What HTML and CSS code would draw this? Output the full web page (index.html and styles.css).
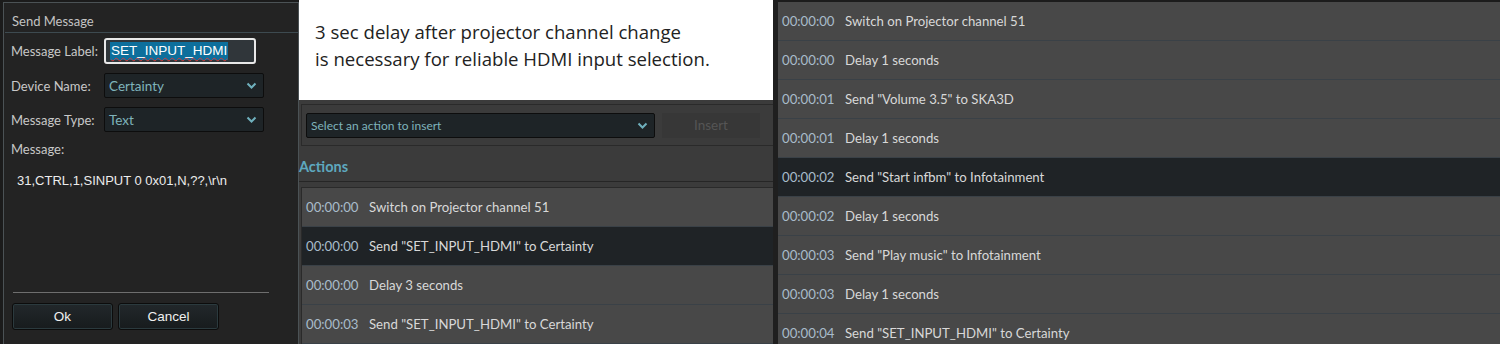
FILE: index.html
```html
<!DOCTYPE html>
<html>
<head>
    <title>Send Message</title>
    <link rel="stylesheet" href="styles.css">
</head>
<body>
    <!-- Send Message dialog -->
    <div class="dlg">
        <div class="dlg-title">Send Message</div>
        <div class="form">
            <label>Message Label:</label>
            <div class="text-in"><span class="sel">SET_INPUT_HDMI</span></div>
            <label>Device Name:</label>
            <div class="combo">Certainty
                <svg width="11" height="7" viewBox="0 0 11 7"><polyline points="1.5,1.5 5.5,5.5 9.5,1.5" fill="none" stroke="#6fb0bd" stroke-width="2"/></svg>
            </div>
            <label>Message Type:</label>
            <div class="combo">Text
                <svg width="11" height="7" viewBox="0 0 11 7"><polyline points="1.5,1.5 5.5,5.5 9.5,1.5" fill="none" stroke="#6fb0bd" stroke-width="2"/></svg>
            </div>
            <label>Message:</label>
        </div>
        <div class="msg">31,CTRL,1,SINPUT 0 0x01,N,??,\r\n</div>
        <div class="dlg-foot">
            <div class="rule"></div>
            <div class="btns">
                <button class="btn">Ok</button>
                <button class="btn">Cancel</button>
            </div>
        </div>
    </div>

    <!-- middle: note + editor -->
    <div class="mid">
        <div class="note">3 sec delay after projector channel change<br>is necessary for reliable HDMI input selection.</div>
        <div class="toolbar">
            <div class="combo wide">Select an action to insert
                <svg width="11" height="7" viewBox="0 0 11 7"><polyline points="1.5,1.5 5.5,5.5 9.5,1.5" fill="none" stroke="#6fb0bd" stroke-width="2"/></svg>
            </div>
            <button class="insert">Insert</button>
        </div>
        <h2 class="sect">Actions</h2>
        <ul class="list">
            <li><span class="t">00:00:00</span>Switch on Projector channel 51</li>
            <li class="on"><span class="t">00:00:00</span>Send "SET_INPUT_HDMI" to Certainty</li>
            <li><span class="t">00:00:00</span>Delay 3 seconds</li>
            <li><span class="t">00:00:03</span>Send "SET_INPUT_HDMI" to Certainty</li>
        </ul>
    </div>

    <!-- right: longer sequence -->
    <div class="right">
        <ul class="list">
            <li><span class="t">00:00:00</span>Switch on Projector channel 51</li>
            <li><span class="t">00:00:00</span>Delay 1 seconds</li>
            <li><span class="t">00:00:01</span>Send "Volume 3.5" to SKA3D</li>
            <li><span class="t">00:00:01</span>Delay 1 seconds</li>
            <li class="on"><span class="t">00:00:02</span>Send "Start infbm" to Infotainment</li>
            <li><span class="t">00:00:02</span>Delay 1 seconds</li>
            <li><span class="t">00:00:03</span>Send "Play music" to Infotainment</li>
            <li><span class="t">00:00:03</span>Delay 1 seconds</li>
            <li><span class="t">00:00:04</span>Send "SET_INPUT_HDMI" to Certainty</li>
        </ul>
    </div>
</body>
</html>
```

FILE: styles.css
```css
* {
  padding: 0;
  margin: 0;
  box-sizing: border-box;
  list-style: none;
}

body {
  width: 1500px;
  height: 344px;
  overflow: hidden;
  display: flex;
  background: #1b1b1b;
  font-family: Lato, "Open Sans", sans-serif;
  font-size: 13px;
  color: #cfcfcf;
}

/* dialog */
.dlg {
  width: 296px;
  height: 342px;
  margin: 2px 0 0 3px;
  border: 1px solid #4b5255;
  border-bottom: none;
  background: #232323;
  display: flex;
  flex-direction: column;
}

.dlg-title {
  height: 30px;
  padding: 10px 0 0 7px;
  margin-left: 1px;
  border-bottom: 1px solid #3d4a50;
  color: #c4c4c4;
}

.form {
  display: grid;
  grid-template-columns: 93px 160px;
  row-gap: 9px;
  padding: 5px 0 0 7px;
  align-items: center;
}

.form label {
  color: #c8c8c8;
}

.text-in {
  width: 152px;
  height: 26px;
  border: 2px solid #e8e8e8;
  border-radius: 3px;
  background: #30363a;
  padding: 3px 0 0 4px;
  font-family: "Liberation Sans", Arial, sans-serif;
  font-size: 13.5px;
}

.text-in .sel {
  background: #0d6f9c;
  color: #fff;
  padding: 1px 1px 2px 1px;
  text-decoration: underline wavy #d23b3b;
  text-decoration-thickness: 1px;
  text-underline-offset: 2px;
}

.combo {
  height: 25px;
  background: #1e2427;
  border: 1px solid #0d0d0d;
  border-radius: 2px;
  color: #7fb3bb;
  font-size: 13.5px;
  padding: 0 6px 0 4px;
  display: flex;
  align-items: center;
  justify-content: space-between;
}

.msg {
  margin: 16px 0 0 13px;
  font-family: "Liberation Sans", Arial, sans-serif;
  font-size: 13px;
  color: #ececec;
}

.dlg-foot {
  margin-top: auto;
  padding: 0 0 14px 8px;
}

.rule {
  width: 256px;
  border-top: 1px solid #6e6e6e;
  margin-left: 1px;
}

.btns {
  display: flex;
  gap: 5px;
  margin-top: 10px;
}

.btn {
  width: 101px;
  height: 27px;
  background: linear-gradient(#22282b, #171b1d);
  border: 1px solid #0c0c0c;
  border-radius: 3px;
  box-shadow: inset 0 0 0 1px #2b3a3e;
  color: #f0f0f0;
  font-family: "Liberation Sans", Arial, sans-serif;
  font-size: 13.5px;
}

/* middle panel */
.mid {
  width: 479px;
  background: #3b3b3b;
  display: flex;
  flex-direction: column;
  border-right: 5px solid #1f1f1f;
}

.note {
  height: 101px;
  background: #fff;
  color: #222;
  font-family: "Open Sans", sans-serif;
  font-size: 18.6px;
  line-height: 27px;
  padding: 18px 0 0 16px;
  white-space: nowrap;
}

.toolbar {
  margin: 4px 0 0 2px;
  height: 42px;
  border: 1px solid #2a2a2a;
  border-right: none;
  display: flex;
  align-items: center;
  gap: 7px;
  padding: 0 0 0 4px;
}

.combo.wide {
  width: 349px;
  font-size: 12px;
}

.insert {
  width: 98px;
  height: 25px;
  background: #373737;
  border: none;
  color: #555;
  font-family: Lato, sans-serif;
  font-size: 13.5px;
}

.sect {
  font-size: 14.5px;
  font-weight: bold;
  color: #5ea8bf;
  padding: 12px 0 0 0;
  height: 36px;
  border-bottom: 1px solid #262626;
}

.mid .list {
  margin: 5px 0 0 2px;
  border-top: 1px solid #2a2a2a;
  border-left: 1px solid #2a2a2a;
}

/* list rows */
.list li {
  height: 39px;
  background: #484848;
  border-bottom: 1px solid #3a4147;
  display: flex;
  align-items: center;
  padding-left: 4px;
  color: #d8d8d8;
  font-size: 13.2px;
  white-space: nowrap;
}

.list li.on {
  background: #1f2326;
}

.list .t {
  width: 63px;
  color: #a8bccb;
}

.right {
  flex: 1;
  background: #484848;
}

.right .list {
  border-top: 2px solid #1c1c1c;
}
```
